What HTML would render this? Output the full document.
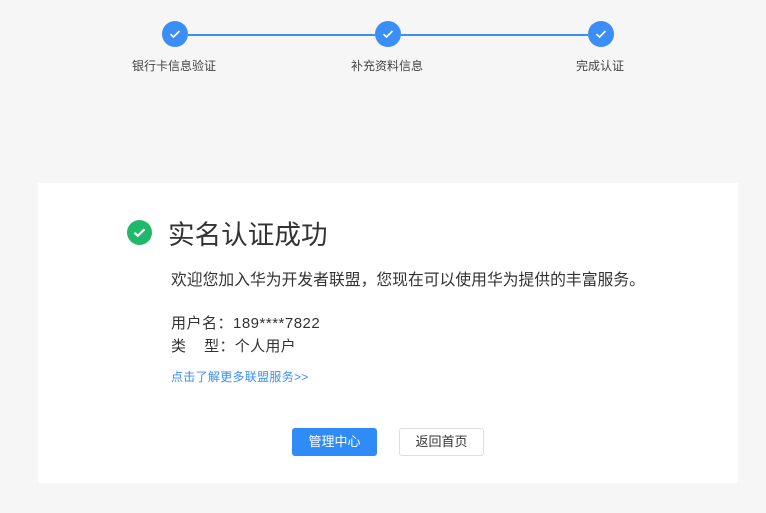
<!DOCTYPE html>
<html><head><meta charset="utf-8"><style>
body{margin:0;width:766px;height:513px;background:#f6f6f6;font-family:"Liberation Sans","Noto Sans CJK SC",sans-serif;position:relative;overflow:hidden;color:#333}
.a{position:absolute}
.c{width:26px;height:26px;border-radius:50%;background:#3a8ef6}
.c svg{position:absolute;left:5px;top:5px}
.lbl{font-size:12px;color:#444;top:57px;white-space:nowrap}
.line{height:2px;background:#3a8ef6;top:34px}
</style></head><body>
<div class="a line" style="left:188px;width:187px"></div>
<div class="a line" style="left:401px;width:187px"></div>
<div class="a c" style="left:162px;top:21px"><svg width="16" height="16" viewBox="0 0 16 16"><path d="M3.5 8.2l3 2.8L12.5 5" stroke="#fff" stroke-width="1.6" fill="none"/></svg></div>
<div class="a c" style="left:375px;top:21px"><svg width="16" height="16" viewBox="0 0 16 16"><path d="M3.5 8.2l3 2.8L12.5 5" stroke="#fff" stroke-width="1.6" fill="none"/></svg></div>
<div class="a c" style="left:588px;top:21px"><svg width="16" height="16" viewBox="0 0 16 16"><path d="M3.5 8.2l3 2.8L12.5 5" stroke="#fff" stroke-width="1.6" fill="none"/></svg></div>
<div class="a lbl" style="left:132px">银行卡信息验证</div>
<div class="a lbl" style="left:351px">补充资料信息</div>
<div class="a lbl" style="left:576px">完成认证</div>
<div class="a" style="left:38px;top:183px;width:700px;height:300px;background:#fff"></div>
<div class="a" style="left:127px;top:220px;width:25px;height:25px;border-radius:50%;background:#21b86b"><svg class="a" style="left:4px;top:4px" width="17" height="17" viewBox="0 0 17 17"><path d="M3.5 8.8l3.3 3L13.5 5.3" stroke="#fff" stroke-width="2.2" fill="none"/></svg></div>
<div class="a" style="left:168px;top:213px;font-size:26.6px;color:#333">实名认证成功</div>
<div class="a" style="left:171px;top:267px;font-size:15.8px;color:#333">欢迎您加入华为开发者联盟，您现在可以使用华为提供的丰富服务。</div>
<div class="a" style="left:171px;top:312px;font-size:15px;color:#333;letter-spacing:0.5px">用户名：189****7822</div>
<div class="a" style="left:171px;top:335px;font-size:15px;color:#333;letter-spacing:0.3px">类&nbsp;&nbsp;&nbsp;&nbsp;型：个人用户</div>
<div class="a" style="left:171px;top:368px;font-size:12px;color:#3a8ef6;letter-spacing:0.3px">点击了解更多联盟服务&gt;&gt;</div>
<div class="a" style="left:292px;top:428px;width:85px;height:28px;background:#2f8bf6;border-radius:3px;color:#fff;font-size:13px;text-align:center;line-height:28px">管理中心</div>
<div class="a" style="left:399px;top:428px;width:83px;height:26px;border:1px solid #ddd;border-radius:3px;color:#333;font-size:13px;text-align:center;line-height:26px;background:#fff">返回首页</div>
</body></html>
